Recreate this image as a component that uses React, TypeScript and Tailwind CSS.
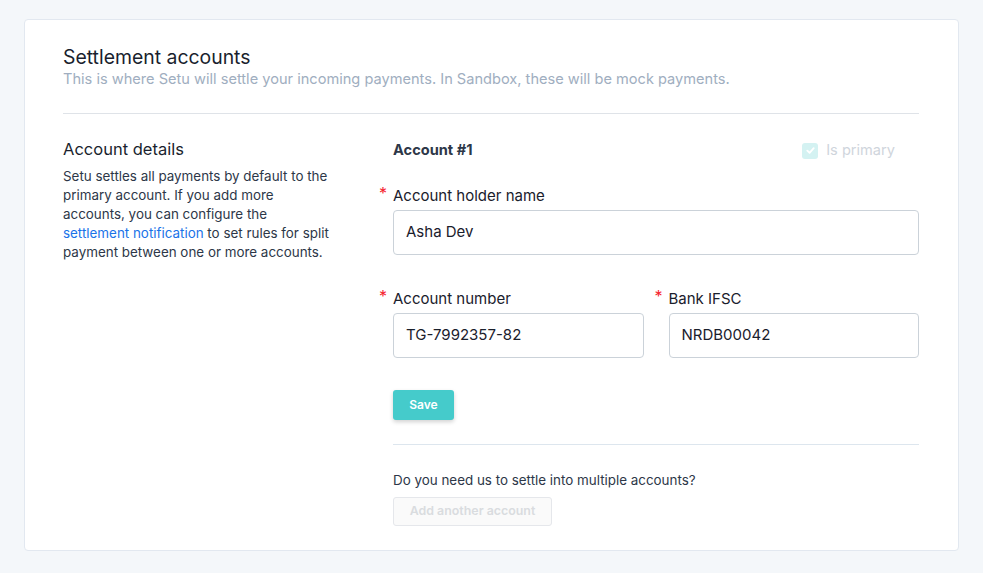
import React from 'react';

function Field({ label, value, className = '' }: { label: string; value: string; className?: string }) {
  return (
    <div className={className}>
      <div className="relative text-[15px] leading-[20px] text-[#1a202c]">
        <span className="absolute left-[-14px] top-[-3px] text-[16px] text-[#f5222d]">*</span>
        {label}
      </div>
      <div className="mt-[4px] flex h-[45px] items-center rounded-[4px] border border-[#cbd2d9] bg-white px-[12px] text-[15px] text-[#1a202c]">
        {value}
      </div>
    </div>
  );
}

export default function App() {
  return (
    <div className="min-h-[573px] bg-[#f4f7fa] px-[24px] pt-[19px] pb-[22px]" style={{ fontFamily: 'Inter, "Noto Sans", sans-serif' }}>
      <div className="rounded-[4px] border border-[#e2e8f0] bg-white pl-[38px] pr-[39px] pt-[25px] pb-[24px]">
        {/* Header */}
        <div className="border-b border-[#dfe3e8] pb-[24px]">
          <h1 className="text-[19.4px] leading-[24px] text-[#1a1f2e]">Settlement accounts</h1>
          <p className="text-[14.6px] leading-[20px] text-[#a0aec0]">
            This is where Setu will settle your incoming payments. In Sandbox, these will be mock payments.
          </p>
        </div>

        <div className="flex pt-[24px]">
          {/* Left column */}
          <div className="w-[330px] shrink-0 pr-[58px]">
            <h2 className="text-[16.5px] leading-[22px] text-[#1a1f2e]">Account details</h2>
            <p className="mt-[7px] text-[13.4px] leading-[19px] text-[#2d3748]">
              Setu settles all payments by default to the primary account. If you add more accounts, you can configure the{' '}
              <a className="text-[#1a73e8]">settlement notification</a> to set rules for split payment between one or more accounts.
            </p>
          </div>

          {/* Right column */}
          <div className="flex-1">
            <div className="flex items-center justify-between pt-[2px]">
              <span className="text-[14.6px] font-bold text-[#2d3748]">Account #1</span>
              <label className="mr-[24px] flex items-center gap-[8px] text-[14.6px] text-[#cfd5dc]">
                <span className="flex h-[16px] w-[16px] items-center justify-center rounded-[3px] bg-[#d4f2f2]">
                  <svg viewBox="0 0 12 12" className="h-[11px] w-[11px]" fill="none" stroke="white" strokeWidth="2" strokeLinecap="round" strokeLinejoin="round">
                    <path d="M2.5 6.2 L5 8.5 L9.5 3.5" />
                  </svg>
                </span>
                Is primary
              </label>
            </div>

            <Field className="mt-[24px]" label="Account holder name" value="Asha Dev" />

            <div className="mt-[34px] grid grid-cols-2 gap-[25px]">
              <Field label="Account number" value="TG-7992357-82" />
              <Field label="Bank IFSC" value="NRDB00042" />
            </div>

            <button className="mt-[32px] h-[30px] w-[61px] rounded-[3px] bg-[#45cbcb] text-[12px] font-semibold text-white shadow-[0_2px_4px_rgba(0,0,0,0.18)]">
              Save
            </button>

            <div className="mt-[24px] border-t border-[#dde6ee]" />

            <p className="mt-[26px] text-[13.4px] leading-[18px] text-[#2d3748]">Do you need us to settle into multiple accounts?</p>
            <button
              disabled
              className="mt-[8px] h-[29px] w-[159px] rounded-[3px] border border-[#e5e7eb] bg-[#fafafa] text-[12.4px] font-semibold text-[#d9dcdf]"
            >
              Add another account
            </button>
          </div>
        </div>
      </div>
    </div>
  );
}
